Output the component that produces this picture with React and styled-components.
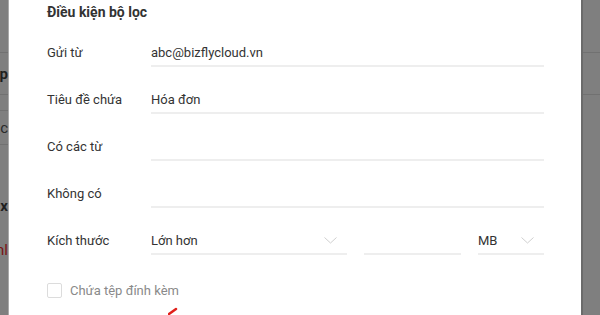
import styled, { createGlobalStyle } from "styled-components";

const GlobalStyle = createGlobalStyle`
  html, body {
    margin: 0;
    padding: 0;
    background: #7f7f7f;
  }
  body {
    font-family: Roboto, "Liberation Sans", Arial, sans-serif;
  }
`;

const Page = styled.div`
  display: flex;
  width: 600px;
  height: 315px;
  overflow: hidden;
  background: #7f7f7f;
`;

const SideStrip = styled.div`
  display: flex;
  flex-direction: column;
  width: ${(p) => p.$width}px;
  flex-shrink: 0;
  overflow: hidden;
  background: #7f7f7f;
  border-right: ${(p) => (p.$left ? "1px solid #a9a9a9" : "none")};
  border-left: ${(p) => (p.$left ? "none" : "2px solid #6b6b6b")};
`;

const StripRow = styled.div`
  display: flex;
  justify-content: flex-end;
  align-items: center;
  height: ${(p) => p.$h}px;
  border-bottom: ${(p) => (p.$line ? "1px solid #717171" : "none")};
  white-space: nowrap;
  font-size: 15px;
  font-weight: ${(p) => (p.$bold ? 700 : 400)};
  color: ${(p) => p.$color || "#1f1f1f"};
`;

const Modal = styled.div`
  flex: 1;
  background: #ffffff;
  padding: 0 37px 0 38px;
  display: flex;
  flex-direction: column;
`;

const Title = styled.h3`
  margin: 0;
  height: 24px;
  line-height: 24px;
  font-size: 14px;
  font-weight: 700;
  color: #333333;
`;

const Form = styled.div`
  display: flex;
  flex-direction: column;
  gap: 17px;
  margin-top: 13px;
`;

const Row = styled.div`
  display: flex;
  align-items: center;
  height: 30px;
`;

const Label = styled.div`
  width: 104px;
  flex-shrink: 0;
  font-size: 13px;
  color: #333333;
`;

const Field = styled.div`
  display: flex;
  align-items: center;
  justify-content: space-between;
  height: 30px;
  box-sizing: border-box;
  width: ${(p) => (p.$width ? `${p.$width}px` : "auto")};
  flex: ${(p) => (p.$width ? "none" : 1)};
  border-bottom: 2px solid #eeeeee;
  padding-top: 2px;
  padding-right: ${(p) => (p.$select ? "10px" : "0")};
  font-size: 13px;
  color: #333333;
`;

const Controls = styled.div`
  display: flex;
  gap: 17px;
  flex: 1;
`;

const CheckRow = styled.label`
  display: flex;
  align-items: center;
  gap: 8px;
  margin-top: 28px;
  font-size: 13px;
  color: #8a8a8a;
`;

const Box = styled.span`
  width: 13px;
  height: 13px;
  border: 1px solid #dcdcdc;
  border-radius: 2px;
  background: #fff;
`;

const Mark = styled.svg`
  margin: 9px 0 0 121px;
  flex-shrink: 0;
`;

const Chevron = () => (
  <svg width="13" height="7" viewBox="0 0 13 7">
    <path d="M0.5 0.5 L6.5 6 L12.5 0.5" fill="none" stroke="#cfcfcf" strokeWidth="1" />
  </svg>
);

const rows = [
  { label: "Gửi từ", value: "abc@bizflycloud.vn" },
  { label: "Tiêu đề chứa", value: "Hóa đơn" },
  { label: "Có các từ", value: "" },
  { label: "Không có", value: "" },
];

export default function App() {
  return (
    <Page>
      <GlobalStyle />
      <SideStrip $width={8} $left>
        <StripRow $h={52} $line />
        <StripRow $h={41} $line $bold>
          Tổng hợp
        </StripRow>
        <StripRow $h={15} $line />
        <StripRow $h={33} $line $color="#2a2a2a">
          Cc
        </StripRow>
        <StripRow $h={38} />
        <StripRow $h={46} $bold>
          Xóa x
        </StripRow>
        <StripRow $h={42} $color="#7a1414">
          Xem nhanl
        </StripRow>
      </SideStrip>
      <Modal>
        <Title>Điều kiện bộ lọc</Title>
        <Form>
          {rows.map((r) => (
            <Row key={r.label}>
              <Label>{r.label}</Label>
              <Field>{r.value}</Field>
            </Row>
          ))}
          <Row>
            <Label>Kích thước</Label>
            <Controls>
              <Field $width={196} $select>
                Lớn hơn
                <Chevron />
              </Field>
              <Field $width={97} />
              <Field $width={66} $select>
                MB
                <Chevron />
              </Field>
            </Controls>
          </Row>
        </Form>
        <CheckRow>
          <Box />
          Chứa tệp đính kèm
        </CheckRow>
        <Mark width="10" height="8" viewBox="0 0 10 8">
          <path d="M1 7 L8 2" stroke="#e0201a" strokeWidth="2.5" strokeLinecap="round" />
        </Mark>
      </Modal>
      <SideStrip $width={18}>
        <StripRow $h={52} $line />
        <StripRow $h={41} $line />
      </SideStrip>
    </Page>
  );
}
